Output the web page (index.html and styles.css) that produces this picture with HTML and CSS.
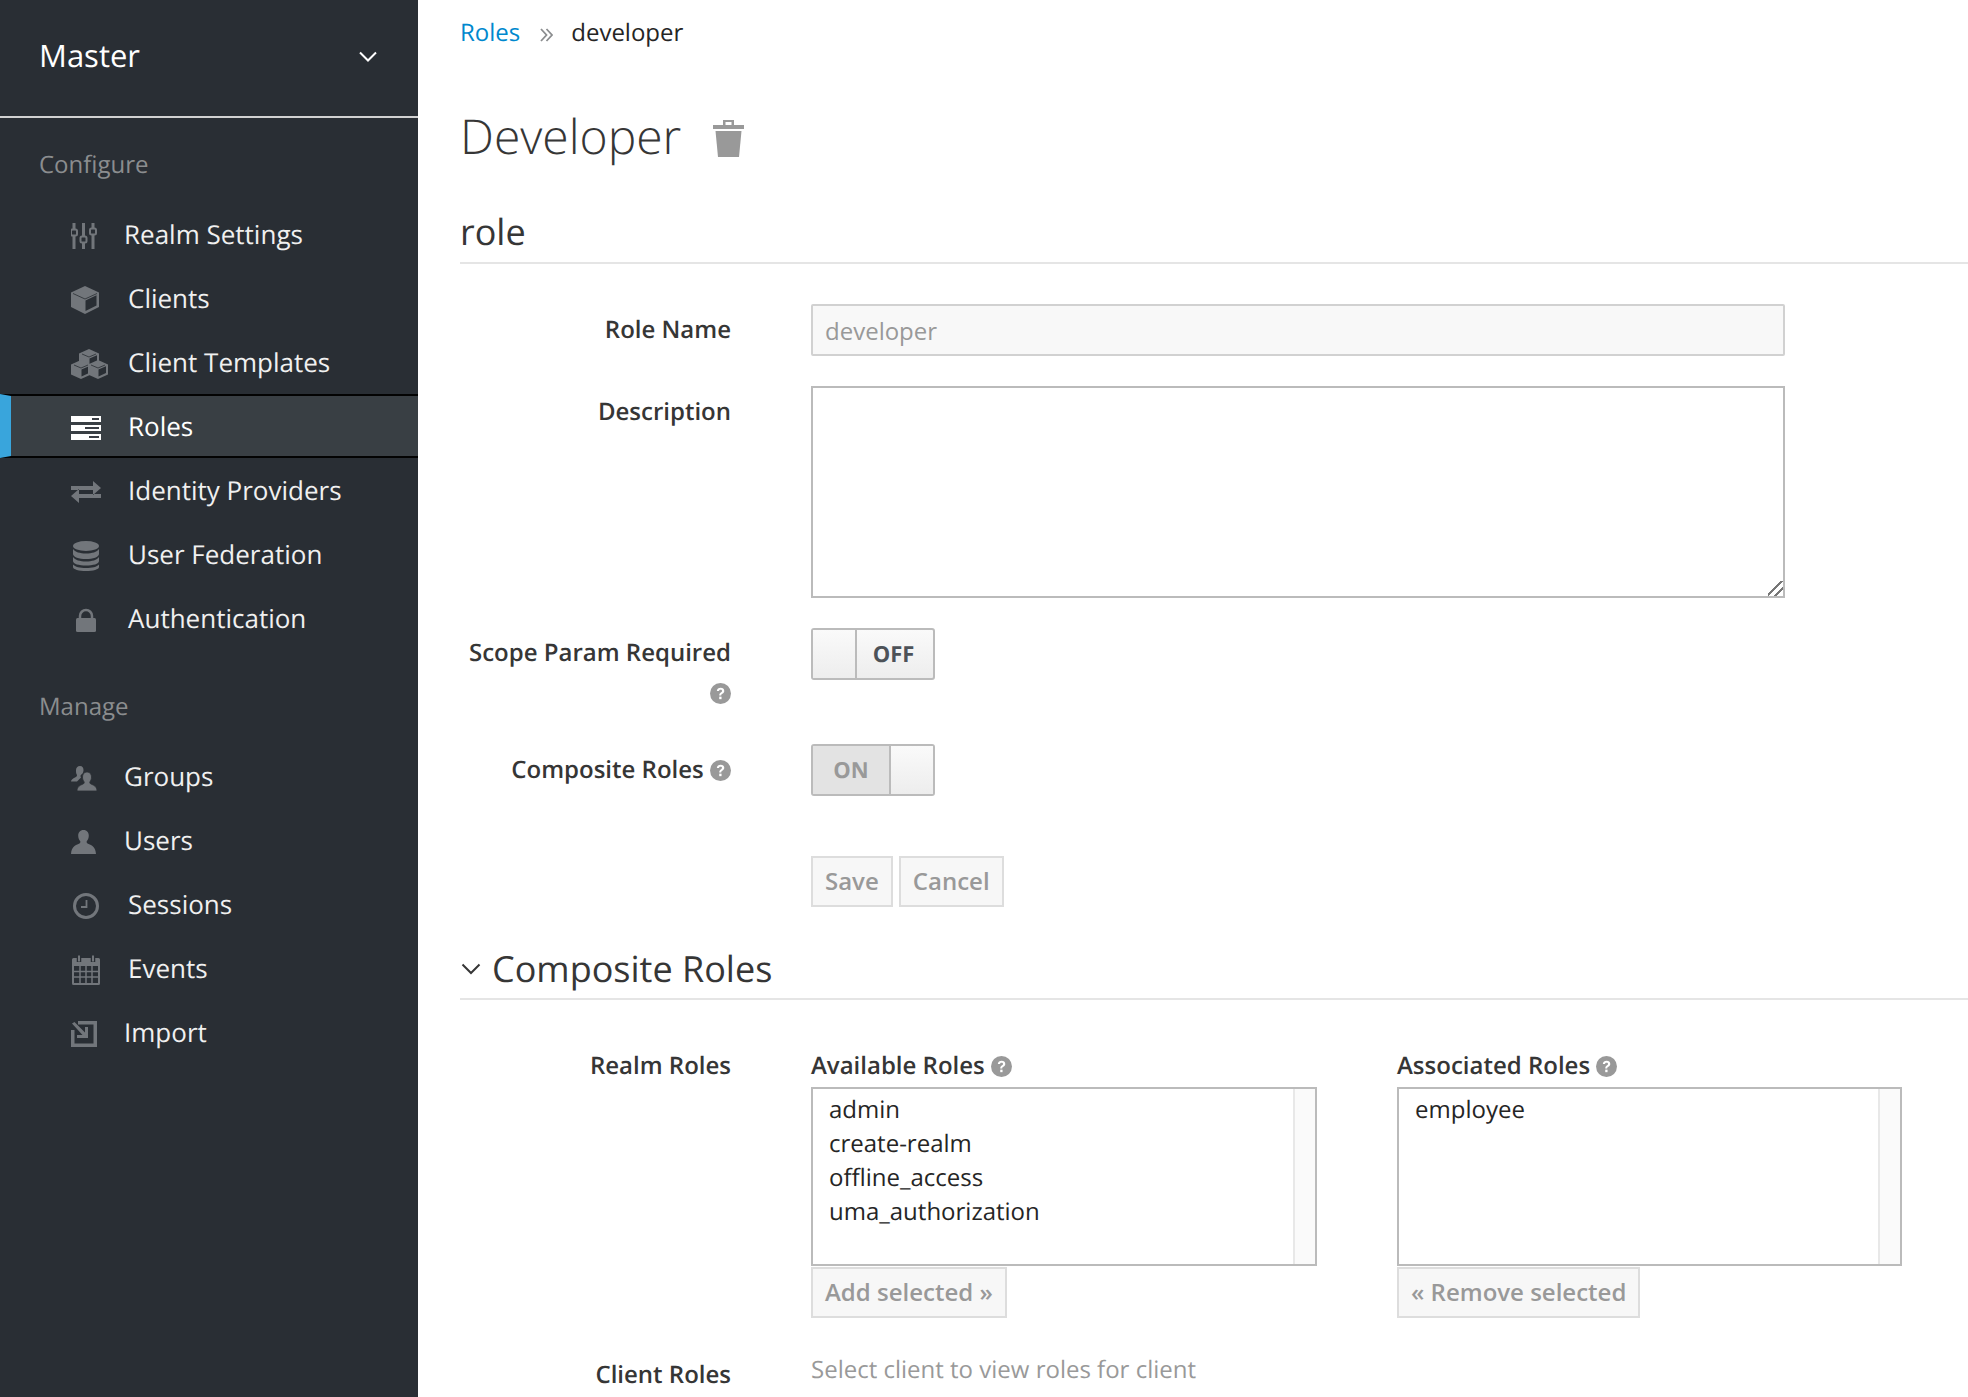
FILE: index.html
```html
<!DOCTYPE html>
<html lang="en">
<head>
    <meta charset="UTF-8">
    <title>Roles: developer</title>
    <link rel="stylesheet" href="styles.css">
</head>
<body>
    <svg class="defs" width="0" height="0">
        <symbol id="help" viewBox="0 0 20 20">
            <circle cx="10" cy="10" r="10" fill="#999"/>
            <path d="M6.500 7.600c.2-2 1.700-3 3.600-3 2 0 3.500 1.100 3.500 2.900 0 1.500-1 2.200-1.900 2.800-.7.500-1 .8-1 1.700H8.800c0-1.600.5-2.300 1.500-3 .8-.5 1.200-.9 1.200-1.500 0-.7-.6-1.100-1.400-1.100-.9 0-1.400.5-1.500 1.300z" fill="#fff"/>
            <rect x="8.800" y="13" width="2.200" height="2.400" fill="#fff"/>
        </symbol>
    </svg>

    <!-- Sidebar -->
    <aside class="sidebar">
        <div class="realm">
            <span>Master</span>
            <svg width="18" height="11" viewBox="0 0 18 11"><path d="M1 1.500l8 8 8-8" fill="none" stroke="#fff" stroke-width="2"/></svg>
        </div>

        <h2 class="nav-title">Configure</h2>
        <ul class="nav">
            <li>
                <span class="nav-icon narrow">
                    <svg width="26" height="26" viewBox="0 0 26 26" fill="none" stroke="#72767b" stroke-width="3">
                        <path d="M3 0v26M12.500 0v26M22 0v26"/>
                        <g fill="#292e34" stroke-width="2">
                            <rect x="0" y="6.500" width="6" height="6" rx="1.500"/>
                            <rect x="9.500" y="13.500" width="6" height="6" rx="1.500"/>
                            <rect x="19" y="5.500" width="6" height="6" rx="1.500"/>
                        </g>
                    </svg>
                </span>
                Realm Settings
            </li>
            <li>
                <span class="nav-icon">
                    <svg width="28" height="28" viewBox="0 0 28 28">
                        <path d="M14 0L28 6.500V21L14 28 0 21V6.500z" fill="#72767b"/>
                        <path d="M14.500 14.500V25l11-5.500V9.200z" fill="#292e34"/>
                        <path d="M2 7.500L14 13l12-5.500" fill="none" stroke="#292e34" stroke-width=".8"/>
                    </svg>
                </span>
                Clients
            </li>
            <li>
                <span class="nav-icon">
                    <svg width="37" height="30" viewBox="0 0 37 30">
                        <g id="box">
                            <path d="M18 0l10 4.500v10L18 19 8 14.500v-10z" fill="#72767b"/>
                            <path d="M18.500 9.500v7l7.500-3.400V6.200z" fill="#292e34"/>
                            <path d="M11 5l7 3 7-3" fill="none" stroke="#292e34" stroke-width=".8"/>
                        </g>
                        <use href="#box" x="-8" y="11"/>
                        <use href="#box" x="9" y="11"/>
                    </svg>
                </span>
                Client Templates
            </li>
            <li class="active">
                <span class="nav-icon">
                    <svg width="30" height="24" viewBox="0 0 30 24" fill="#fff">
                        <path d="M0 0h30v6H0zM0 9h30v6H0zM0 18h30v6H0z"/>
                        <path d="M21 2h7v2h-7zM14 11h14v2H14zM18 20h10v2H18z" fill="#3a3e45"/>
                    </svg>
                </span>
                Roles
            </li>
            <li>
                <span class="nav-icon">
                    <svg width="30" height="22" viewBox="0 0 30 22" fill="#72767b">
                        <path d="M0 5h22V0l8 7-8 7V9H0zM30 13H8V8l-8 7 8 7v-5h22z"/>
                    </svg>
                </span>
                Identity Providers
            </li>
            <li>
                <span class="nav-icon">
                    <svg width="30" height="30" viewBox="0 0 30 30" fill="#72767b">
                        <ellipse cx="15" cy="5" rx="13" ry="5"/>
                        <path d="M2 8c2 3 7 4.500 13 4.500S26 11 28 8v5c0 3-6 5-13 5S2 16 2 13z"/>
                        <path d="M2 16c2 3 7 4.500 13 4.500S26 19 28 16v4c0 3-6 4.500-13 4.500S2 23 2 20z"/>
                        <path d="M2 23.500c2 2.500 7 3.500 13 3.500s11-1 13-3.500V26c0 2.500-6 4-13 4S2 28.500 2 26z"/>
                    </svg>
                </span>
                User Federation
            </li>
            <li>
                <span class="nav-icon">
                    <svg width="30" height="24" viewBox="0 0 30 24">
                        <path d="M9 12V8a6 6 0 0 1 12 0v4" fill="none" stroke="#72767b" stroke-width="2.500"/>
                        <rect x="5" y="10" width="20" height="14" rx="1.500" fill="#72767b"/>
                    </svg>
                </span>
                Authentication
            </li>
        </ul>

        <h2 class="nav-title manage">Manage</h2>
        <ul class="nav">
            <li>
                <span class="nav-icon narrow">
                    <svg width="26" height="25" viewBox="0 0 26 25" fill="#72767b">
                        <path d="M9 0c2.500 0 3.500 2 3.500 4 0 1.500-.5 3-1.500 4-1.500 1-2 2-1 3.500L6 15.500H0c0-2 2-3 4-4 2-1 2.500-2 1.500-3.500C5 7 5 5.500 5 4c0-2 1.500-4 4-4z"/>
                        <path d="M16 6c3 0 4.500 2.300 4.500 5 0 2-.7 3.500-1.500 4.700-.6 1 0 2 1.500 2.600 2.500 1 5.500 2.400 5.500 6.700H6c0-4.300 3-5.700 5.500-6.700 1.500-.6 2.100-1.600 1.500-2.600C12.200 14.500 11.500 13 11.500 11c0-2.700 1.500-5 4.500-5z" stroke="#292e34" stroke-width=".8"/>
                    </svg>
                </span>
                Groups
            </li>
            <li>
                <span class="nav-icon narrow">
                    <svg width="25" height="24" viewBox="0 0 25 24" fill="#72767b">
                        <path d="M12.500 0c3.500 0 5.300 2.500 5.300 5.600 0 2.400-.9 4.200-1.900 5.500-.8 1.100 0 2.300 1.700 3 3 1.200 6.900 2.700 7.400 9.900H0c.5-7.200 4.400-8.700 7.400-9.900 1.700-.7 2.500-1.900 1.700-3C8.100 9.800 7.200 8 7.200 5.600 7.200 2.500 9 0 12.500 0z"/>
                    </svg>
                </span>
                Users
            </li>
            <li>
                <span class="nav-icon">
                    <svg width="30" height="26" viewBox="0 0 30 26" fill="none" stroke="#72767b">
                        <circle cx="15" cy="13" r="11.500" stroke-width="3"/>
                        <path d="M15.500 7v7H10" stroke-width="1.800"/>
                    </svg>
                </span>
                Sessions
            </li>
            <li>
                <span class="nav-icon">
                    <svg width="30" height="30" viewBox="0 0 30 30">
                        <path d="M2.500 3h25A1.500 1.500 0 0 1 29 4.500v24a1.500 1.500 0 0 1-1.500 1.500h-25A1.500 1.500 0 0 1 1 28.500v-24A1.500 1.500 0 0 1 2.500 3z" fill="#72767b"/>
                        <path d="M3 11h24v17H3z" fill="#292e34"/>
                        <path d="M9 11v17M15 11v17M21 11v17M3 16.500h24M3 22h24" stroke="#72767b" stroke-width="1.500"/>
                        <path d="M8 1v6M22 1v6" stroke="#292e34" stroke-width="4.500"/>
                        <path d="M8 .5v6M22 .5v6" stroke="#72767b" stroke-width="2"/>
                    </svg>
                </span>
                Events
            </li>
            <li>
                <span class="nav-icon narrow">
                    <svg width="26" height="26" viewBox="0 0 26 26" fill="#72767b">
                        <path d="M7 0h19v26H0V9h3.500v13.500h19v-19H7z"/>
                        <path d="M0 1.500L2.500 0l10.500 10.500V5h3v11H5v-3h5.500z" transform="translate(1 1)"/>
                    </svg>
                </span>
                Import
            </li>
        </ul>
    </aside>

    <!-- Main content -->
    <main class="content">
        <div class="crumbs">
            <a href="#">Roles</a>
            <svg width="13" height="14" viewBox="0 0 13 14" fill="none" stroke="#8b8d8f" stroke-width="1.800"><path d="M1 1l5.500 6L1 13M6.500 1L12 7l-5.500 6"/></svg>
            <span>developer</span>
        </div>

        <div class="page-title">
            <h1>Developer</h1>
            <svg width="31" height="37" viewBox="0 0 31 37" fill="#999">
                <path d="M10 5V0h11v5h10v4H0V5zM12.500 2v3h6V2z" fill-rule="evenodd"/>
                <path d="M2.500 11h26l-2.500 26H5z"/>
            </svg>
        </div>

        <h2 class="section-title">role</h2>

        <div class="form-row row-name">
            <label>Role Name</label>
            <input class="text-input" type="text" value="developer" disabled>
        </div>
        <div class="form-row row-desc">
            <label>Description</label>
            <textarea class="text-area"></textarea>
        </div>
        <div class="form-row row-scope">
            <label>Scope Param Required <svg class="help"><use href="#help"/></svg></label>
            <div class="switch">
                <span class="knob"></span>
                <span class="state off">OFF</span>
            </div>
        </div>
        <div class="form-row row-composite">
            <label>Composite Roles <svg class="help"><use href="#help"/></svg></label>
            <div class="switch">
                <span class="state on">ON</span>
                <span class="knob"></span>
            </div>
        </div>
        <div class="form-row row-buttons">
            <div></div>
            <div class="buttons">
                <button class="btn" type="button">Save</button>
                <button class="btn cancel" type="button">Cancel</button>
            </div>
        </div>

        <h2 class="section-title composite">
            <svg width="20" height="12" viewBox="0 0 20 12"><path d="M1.500 1.500l8.500 8.500 8.500-8.500" fill="none" stroke="#363636" stroke-width="2"/></svg>
            Composite Roles
        </h2>

        <div class="form-row row-roles">
            <label>Realm Roles</label>
            <div class="pickers">
                <div class="picker available">
                    <div class="picker-title">Available Roles <svg class="help"><use href="#help"/></svg></div>
                    <div class="listbox">
                        <ul>
                            <li>admin</li>
                            <li>create-realm</li>
                            <li>offline_access</li>
                            <li>uma_authorization</li>
                        </ul>
                        <div class="track"></div>
                    </div>
                    <button class="btn picker-btn" type="button">Add selected &raquo;</button>
                </div>
                <div class="picker associated">
                    <div class="picker-title">Associated Roles <svg class="help"><use href="#help"/></svg></div>
                    <div class="listbox">
                        <ul>
                            <li>employee</li>
                        </ul>
                        <div class="track"></div>
                    </div>
                    <button class="btn picker-btn" type="button">&laquo; Remove selected</button>
                </div>
            </div>
        </div>

        <div class="form-row row-client">
            <div class="client-col">
                <label>Client Roles</label>
                <div class="client-select"></div>
            </div>
            <p class="hint">Select client to view roles for client</p>
        </div>
    </main>
</body>
</html>
```

FILE: styles.css
```css
* {
    box-sizing: border-box;
    margin: 0;
    padding: 0;
}
html, body {
    height: 100%;
    overflow: hidden;
}
body {
    display: flex;
    font-family: "Open Sans", sans-serif;
    font-size: 24px;
    color: #363636;
    background-color: #fff;
    text-rendering: geometricPrecision;
}
.defs {
    position: absolute;
}
ul {
    list-style: none;
}

/* Sidebar */
.sidebar {
    flex: 0 0 418px;
    background-color: #292e34;
    color: #f0f0f0;
}
.realm {
    display: flex;
    justify-content: space-between;
    align-items: center;
    height: 118px;
    padding: 0 41px 4px 39px;
    border-bottom: 2px solid #d1d1d1;
    color: #fff;
    font-size: 31px;
}
.nav-title {
    height: 84px;
    padding: 30px 0 0 39px;
    font-size: 24px;
    line-height: 34px;
    font-weight: 400;
    color: #8b8d8f;
}
.nav-title.manage {
    height: 94px;
    padding-top: 40px;
}
.nav li {
    display: flex;
    align-items: center;
    height: 64px;
    padding-left: 71px;
    font-size: 26px;
}
.nav li.active {
    padding-left: 60px;
    border-top: 2px solid #030303;
    border-bottom: 2px solid #030303;
    border-left: 11px solid #39a5dc;
    background-color: #393f44;
    color: #fff;
}
.nav-icon {
    display: flex;
    align-items: center;
    flex: 0 0 57px;
    height: 30px;
    margin-top: 4px;
}
.nav-icon.narrow {
    flex-basis: 53px;
}

/* Main */
.content {
    flex: 1;
    min-width: 0;
    padding-left: 42px;
}
.crumbs {
    display: flex;
    align-items: center;
    height: 64px;
    font-size: 24px;
}
.crumbs a {
    color: #0088ce;
    text-decoration: none;
}
.crumbs svg {
    margin: 5px 18px 0 20px;
}
.crumbs span {
    color: #252525;
}
.page-title {
    display: flex;
    align-items: center;
    height: 66px;
    margin-top: 40px;
    gap: 32px;
}
.page-title h1 {
    font-size: 48px;
    font-weight: 300;
    line-height: 66px;
}
.page-title svg {
    margin-top: 2px;
}
.section-title {
    height: 62px;
    margin-top: 32px;
    border-bottom: 2px solid #e5e5e5;
    font-size: 36px;
    font-weight: 400;
    line-height: 60px;
}
.section-title.composite {
    display: flex;
    align-items: center;
    gap: 11px;
    height: 60px;
    margin-top: 33px;
    padding-left: 1px;
}

/* Form rows */
.form-row {
    display: grid;
    grid-template-columns: 271px 1fr;
    column-gap: 80px;
}
.form-row label {
    font-weight: 600;
    text-align: right;
    line-height: 34px;
}
.row-name {
    margin-top: 40px;
}
.row-name label, .row-desc label {
    padding-top: 9px;
}
.text-input {
    display: block;
    width: 974px;
    height: 52px;
    padding: 0 12px;
    border: 2px solid #d1d1d1;
    border-radius: 2px;
    background-color: #f8f8f8;
    color: #999;
    font-family: inherit;
    font-size: 24px;
}
.row-desc {
    margin-top: 30px;
}
.text-area {
    display: block;
    width: 974px;
    height: 212px;
    border: 2px solid #bbb;
    background-color: #fff;
}
.text-area::-webkit-resizer {
    background: linear-gradient(135deg, transparent 42%, #777 42%, #777 52%, transparent 52%, transparent 68%, #777 68%, #777 78%, transparent 78%);
}
.row-scope {
    margin-top: 30px;
}
.row-scope label {
    margin-top: 8px;
}
.row-scope .help {
    display: inline-block;
    margin-top: 13px;
}
.row-composite {
    margin-top: 34px;
}
.row-composite label {
    margin-top: 9px;
}
.help {
    width: 21px;
    height: 21px;
    vertical-align: -3px;
}
.switch {
    display: flex;
    width: 124px;
    height: 52px;
    border: 2px solid #bbb;
    border-radius: 3px;
    font-size: 22px;
    font-weight: 700;
    background: linear-gradient(#fafafa, #ededed);
}
.knob {
    flex: 1;
    background: linear-gradient(#fafafa, #ededed);
}
.state {
    display: flex;
    align-items: center;
    justify-content: center;
    width: 78px;
}
.state.off {
    padding-right: 3px;
    border-left: 2px solid #bbb;
    color: #4d5258;
}
.state.on {
    border-right: 2px solid #bbb;
    background: #e3e3e3;
    color: #999;
}
.row-buttons {
    margin-top: 60px;
}
.buttons {
    display: flex;
    gap: 6px;
}
.btn {
    height: 51px;
    padding: 0 12px 2px;
    border: 2px solid #ddd;
    background-color: #f7f7f7;
    color: #999;
    font-family: inherit;
    font-size: 24px;
    font-weight: 600;
}

/* Role pickers */
.row-roles {
    margin-top: 48px;
}
.row-roles label {
    margin-top: 1px;
}
.pickers {
    display: flex;
}
.picker.available {
    width: 586px;
}
.picker-title {
    font-weight: 600;
    line-height: 34px;
    height: 38px;
    margin-top: 1px;
}
.listbox {
    display: flex;
    height: 179px;
    border: 2px solid #bbb;
    background-color: #fff;
}
.available .listbox {
    width: 506px;
}
.associated .listbox {
    width: 505px;
}
.listbox ul {
    flex: 1;
    padding: 4px 16px;
    line-height: 34px;
    color: #252525;
}
.track {
    width: 22px;
    border-left: 2px solid #e8e8e8;
    background-color: #fafafa;
}
.picker-btn {
    display: block;
    margin-top: 1px;
}
.row-client {
    margin-top: 40px;
}
.client-col label {
    display: block;
}
.client-select {
    width: 264px;
    height: 30px;
    margin: 5px 0 0 3px;
    border: 2px solid #bbb;
    border-radius: 6px;
}
.hint {
    color: #999;
    line-height: 34px;
    margin-top: -5px;
}
```
